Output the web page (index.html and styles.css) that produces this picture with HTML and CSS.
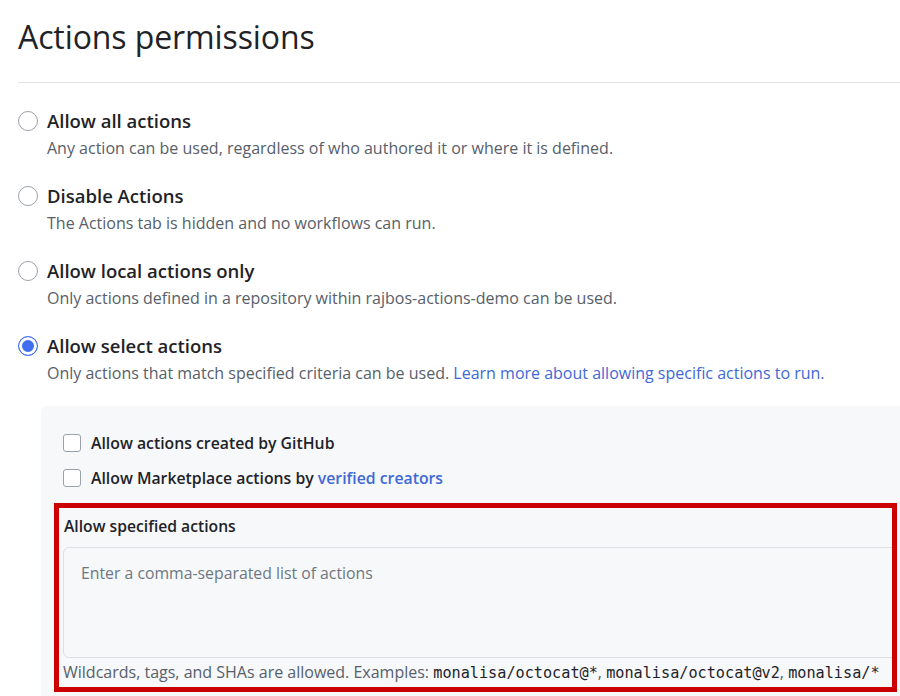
FILE: index.html
```html
<!DOCTYPE html>
<html lang="en">
<head>
<meta charset="utf-8">
<title>Actions permissions</title>
<link rel="stylesheet" href="styles.css">
</head>
<body>
<div class="page">
  <h1 class="title">Actions permissions</h1>
  <hr class="rule">

  <div class="option">
    <div class="option-head"><span class="radio"></span><span class="option-label">Allow all actions</span></div>
    <p class="option-desc">Any action can be used, regardless of who authored it or where it is defined.</p>
  </div>
  <div class="option">
    <div class="option-head"><span class="radio"></span><span class="option-label">Disable Actions</span></div>
    <p class="option-desc">The Actions tab is hidden and no workflows can run.</p>
  </div>
  <div class="option">
    <div class="option-head"><span class="radio"></span><span class="option-label">Allow local actions only</span></div>
    <p class="option-desc">Only actions defined in a repository within rajbos-actions-demo can be used.</p>
  </div>
  <div class="option">
    <div class="option-head"><span class="radio radio-checked"></span><span class="option-label">Allow select actions</span></div>
    <p class="option-desc">Only actions that match specified criteria can be used. <a class="link" href="#">Learn more about allowing specific actions to run.</a></p>
  </div>

  <div class="panel">
    <div class="check-row"><span class="checkbox"></span><span class="check-label">Allow actions created by GitHub</span></div>
    <div class="check-row"><span class="checkbox"></span><span class="check-label">Allow Marketplace actions by <a class="link" href="#">verified creators</a></span></div>

    <div class="specified">
      <div class="specified-title">Allow specified actions</div>
      <textarea class="specified-input" placeholder="Enter a comma-separated list of actions"></textarea>
      <p class="specified-note">Wildcards, tags, and SHAs are allowed. Examples: <code class="mono">monalisa/octocat@*</code>, <code class="mono">monalisa/octocat@v2</code>, <code class="mono">monalisa/*</code></p>
    </div>
  </div>
</div>
</body>
</html>
```

FILE: styles.css
```css
html, body {
  margin: 0;
  padding: 0;
  background: #ffffff;
}

body {
  font-family: "Open Sans", "Noto Sans", "Liberation Sans", sans-serif;
  color: #1f2328;
  overflow: hidden;
  height: 696px;
}

.page {
  padding-left: 18px;
}

.title {
  margin: 13px 0 0 0;
  font-size: 32px;
  font-weight: 400;
  line-height: 48px;
  color: #1f2328;
  letter-spacing: -0.1px;
}

.rule {
  margin: 21px 0 0 0;
  border: 0;
  height: 1px;
  background: #dfe2e6;
}

.option:first-of-type {
  margin-top: 25px;
}

.option + .option {
  margin-top: 23px;
}

.option-head {
  display: flex;
  align-items: center;
  gap: 9px;
  height: 26px;
}

.radio {
  width: 18px;
  height: 18px;
  border: 1px solid #9aa1a9;
  border-radius: 50%;
  background: #ffffff;
  flex: none;
  box-sizing: content-box;
}

.radio-checked {
  border: 1px solid #4470e8;
  background: #3f6ef0;
  box-shadow: inset 0 0 0 3px #ffffff;
}

.option-label {
  font-size: 18.5px;
  font-weight: 600;
  line-height: 26px;
  color: #1f2328;
}

.option-desc {
  margin: 2px 0 0 29px;
  font-size: 16px;
  line-height: 24px;
  color: #57606a;
}

.link {
  color: #4069d6;
  text-decoration: none;
}

.panel {
  margin: 21px 0 0 23px;
  background: #f6f8fa;
  border-radius: 6px 0 0 0;
  padding: 25px 3px 20px 13px;
}

.check-row {
  display: flex;
  align-items: center;
  gap: 10px;
  height: 24px;
  padding-left: 9px;
}

.check-row + .check-row {
  margin-top: 11px;
}

.checkbox {
  width: 16px;
  height: 16px;
  border: 1px solid #9aa1a9;
  border-radius: 3px;
  background: #ffffff;
  flex: none;
}

.check-label {
  font-size: 15.8px;
  font-weight: 600;
  line-height: 24px;
  color: #1f2328;
}

.specified {
  margin-top: 13px;
  border: 5px solid #cc0000;
  padding: 6px 0 2px 4px;
  overflow: hidden;
}

.specified-title {
  font-size: 15.7px;
  font-weight: 600;
  line-height: 24px;
  color: #1f2328;
  padding-left: 1px;
}

.specified-input {
  display: block;
  box-sizing: border-box;
  margin-top: 9px;
  width: calc(100% + 20px);
  height: 111px;
  padding: 13px 17px;
  border: 1px solid #dcdfe3;
  border-radius: 6px;
  background: #f6f8fa;
  font-family: "Open Sans", "Noto Sans", "Liberation Sans", sans-serif;
  font-size: 15.8px;
  line-height: 24px;
  color: #1f2328;
  resize: none;
  outline: none;
}

.specified-input::placeholder {
  color: #6e7781;
}

.specified-note {
  margin: 2px 0 0 0;
  font-size: 16px;
  line-height: 24px;
  color: #57606a;
  white-space: nowrap;
}

.mono {
  font-family: "DejaVu Sans Mono", "Liberation Mono", monospace;
  font-size: 15.2px;
  color: #1f2328;
}
```
